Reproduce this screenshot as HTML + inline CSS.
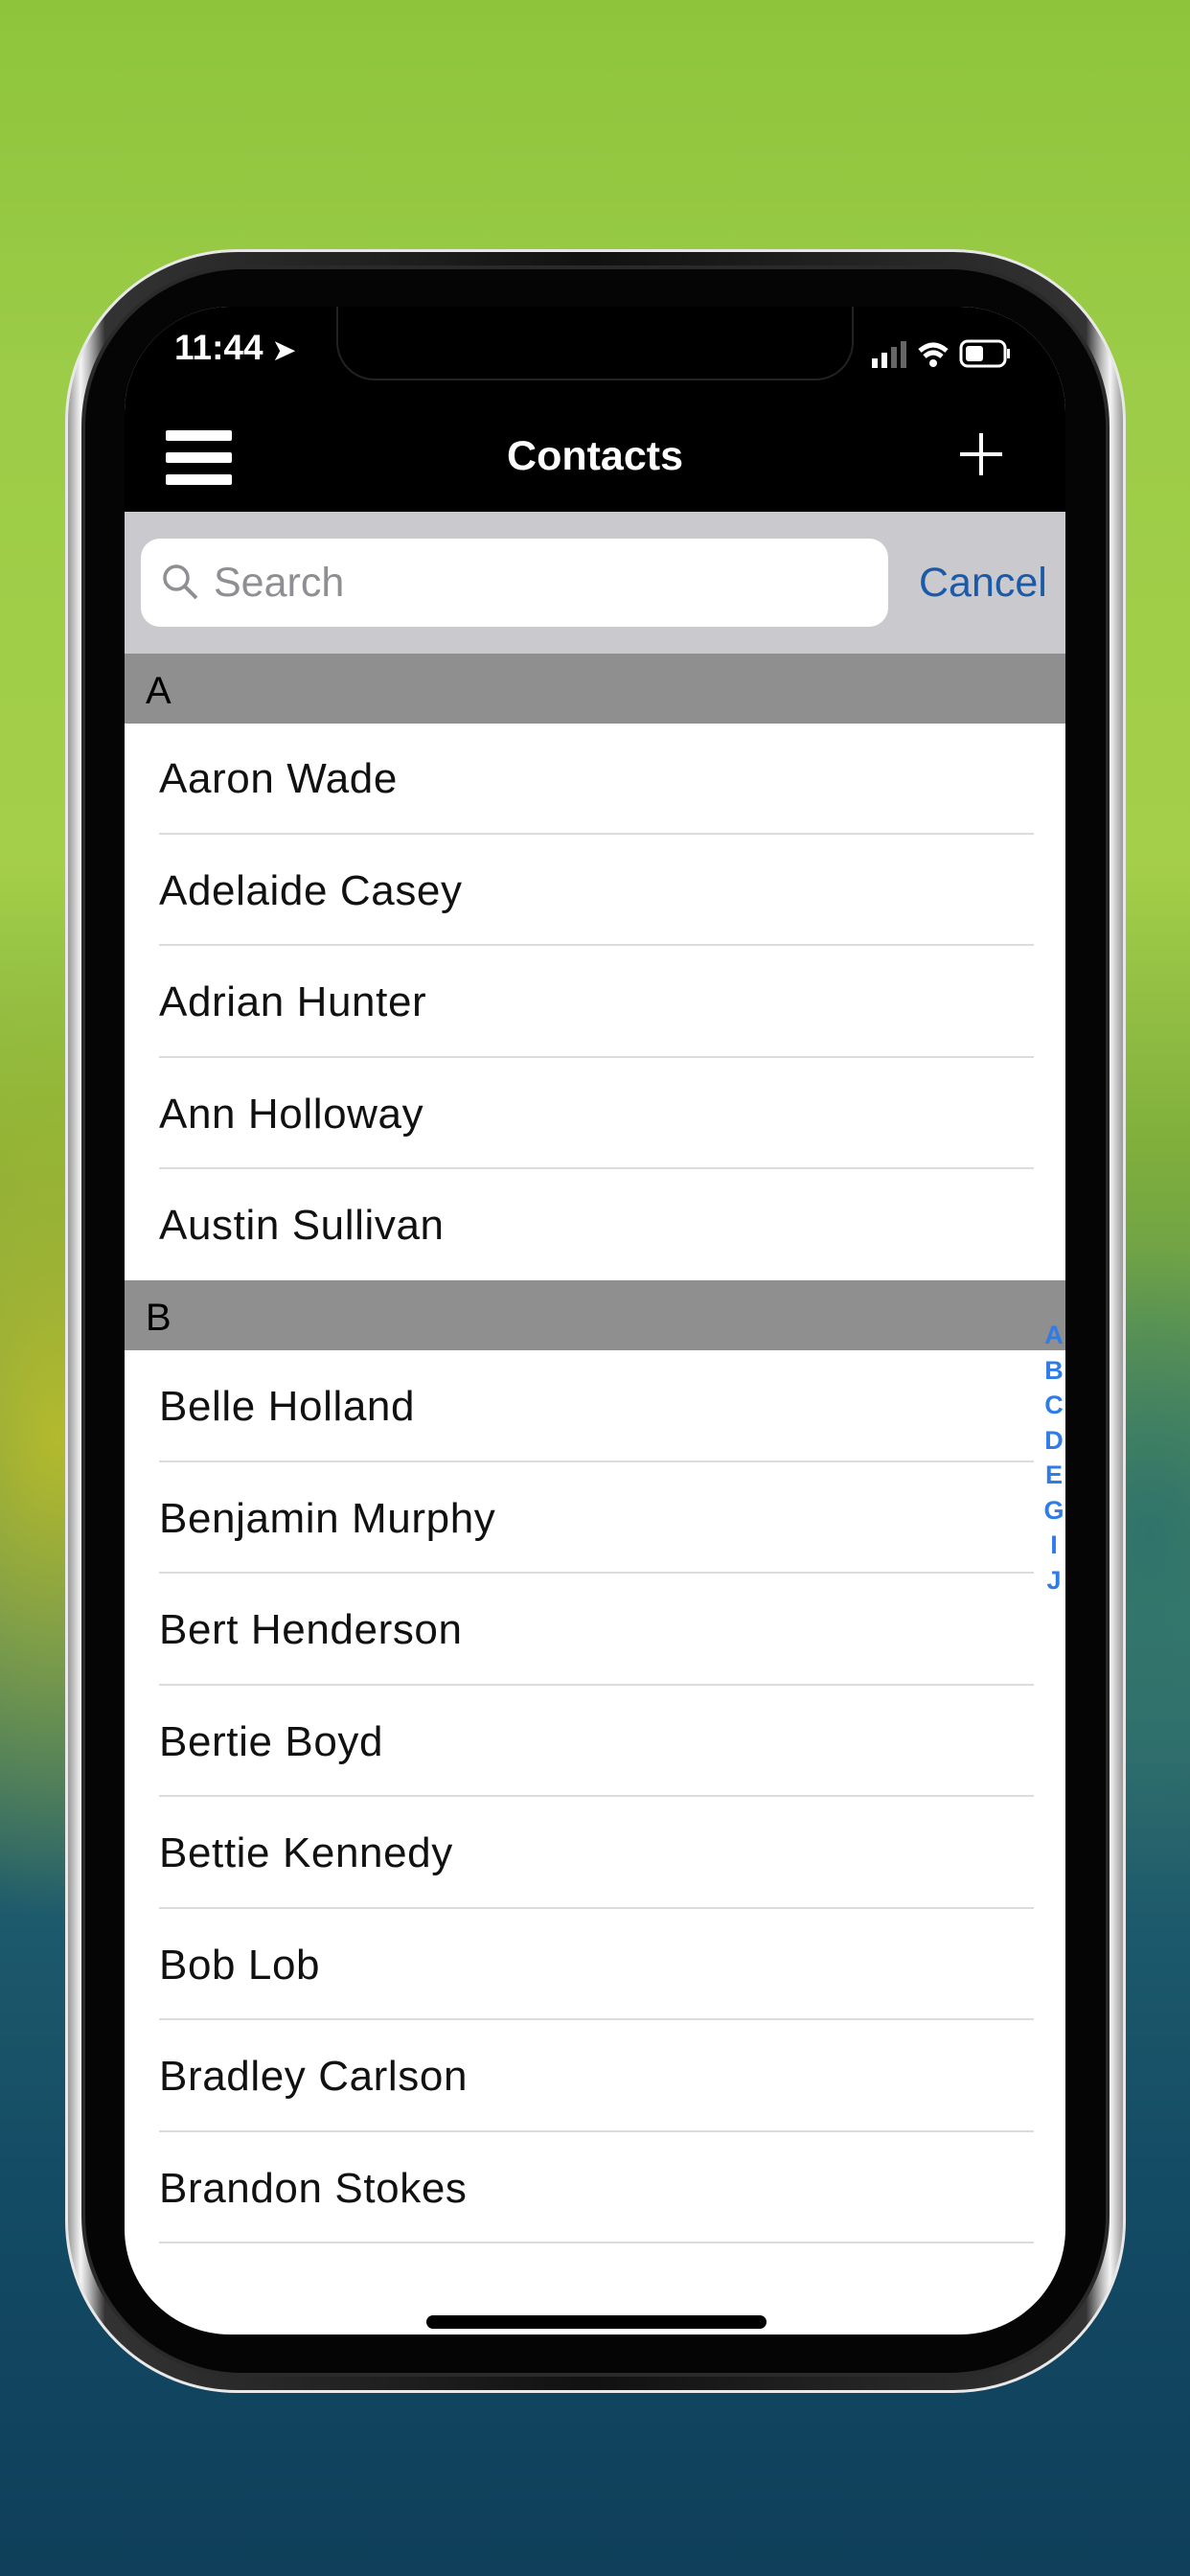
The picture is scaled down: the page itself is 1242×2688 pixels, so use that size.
<!DOCTYPE html>
<html><head><meta charset="utf-8"><style>
*{margin:0;padding:0;box-sizing:border-box}
html,body{width:1242px;height:2688px;overflow:hidden}
body{position:relative;font-family:"Liberation Sans",sans-serif;
background:
radial-gradient(ellipse 300px 500px at 60px 1500px,rgba(190,190,40,.9),rgba(190,190,40,0)),
radial-gradient(ellipse 200px 300px at 1200px 1600px,rgba(40,110,110,.8),rgba(40,110,110,0)),
linear-gradient(180deg,#8ec43c 0px,#9ccc48 400px,#a4cf4a 900px,#7fae3c 1200px,#3d7d6a 1700px,#1d5a6c 2000px,#134a64 2300px,#0f3f5a 2688px);}
.phone{position:absolute;left:68px;top:260px;width:1107px;height:2237px;border-radius:180px;
background:linear-gradient(90deg,#999 0,#f5f5f5 1.2%,#bbb 2%,#333 3.5%,#111 50%,#333 96.5%,#bbb 98%,#f5f5f5 98.8%,#999 100%);border:3px solid #e8e8e8}
.bez{position:absolute;left:14px;top:14px;right:14px;bottom:14px;border-radius:168px;background:#050505;border:4px solid #2a2a2a}
.screen{position:absolute;left:130px;top:320px;width:982px;height:2116px;border-radius:110px;background:#fff;overflow:hidden}
.nav{position:absolute;left:0;top:0;width:982px;height:214px;background:#000}
.notch{position:absolute;left:221px;top:-10px;width:540px;height:87px;background:#000;border-radius:0 0 40px 40px;border:2px solid #222;border-top:none}
.time{position:absolute;left:52px;top:22px;color:#fff;font-size:37px;font-weight:bold}
.title{position:absolute;left:0;width:982px;top:132px;text-align:center;color:#fff;font-size:43px;font-weight:bold}
.ham{position:absolute;left:43px;width:69px;height:11px;background:#fff;border-radius:2px}
.sb{position:absolute;left:0;top:214px;width:982px;height:148px;background:#c9c9ce}
.field{position:absolute;left:17px;top:28px;width:780px;height:92px;background:#fff;border-radius:20px}
.field span{position:absolute;left:76px;top:22px;font-size:43px;color:#8e8e93}
.cancel{position:absolute;left:829px;top:50px;font-size:43px;color:#1a5aa8}
.sec{position:absolute;left:0;width:982px;height:73px;background:#8f8f8f;font-size:40px;color:#000;padding-left:22px;line-height:78px}
.row{position:absolute;left:0;width:982px;height:116.5px}
.row span{position:absolute;left:36px;top:34px;font-size:44px;color:#111;letter-spacing:.6px}
.row i{position:absolute;left:36px;right:33px;bottom:0;height:2px;background:#dcdcdc}
.idx{position:absolute;left:958px;width:24px;text-align:center;font-size:27px;font-weight:bold;color:#2f7be8}
.home{position:absolute;left:315px;top:2096px;width:355px;height:14px;border-radius:7px;background:#000}
</style></head><body>
<div class="phone"><div class="bez"></div></div>
<div class="screen">
 <div class="nav">
  <div class="notch"></div>
  <div class="time">11:44 <span style="font-size:28px">➤</span></div>
  <svg style="position:absolute;left:778px;top:30px" width="150" height="40">
   <rect x="2" y="24" width="6" height="10" fill="#fff"/><rect x="12" y="18" width="6" height="16" fill="#fff"/><rect x="22" y="12" width="6" height="22" fill="#666"/><rect x="32" y="6" width="6" height="28" fill="#666"/>
   <path d="M52 16 Q66 4 80 16" stroke="#fff" stroke-width="5" fill="none"/><path d="M57 22 Q66 14 75 22" stroke="#fff" stroke-width="5" fill="none"/><circle cx="66" cy="29" r="4" fill="#fff"/>
   <rect x="95" y="6" width="46" height="26" rx="7" fill="none" stroke="#fff" stroke-width="3"/><rect x="100" y="11" width="18" height="16" rx="3" fill="#fff"/><rect x="143" y="14" width="3" height="10" fill="#fff"/>
  </svg>
  <div class="ham" style="top:129px"></div><div class="ham" style="top:152px"></div><div class="ham" style="top:175px"></div>
  <div class="title">Contacts</div>
  <svg style="position:absolute;left:870px;top:130px" width="48" height="48"><path d="M24 2V46M2 24H46" stroke="#fff" stroke-width="4"/></svg>
 </div>
 <div class="sb">
  <div class="field"><svg style="position:absolute;left:20px;top:24px" width="44" height="44"><circle cx="17" cy="17" r="12" stroke="#8e8e93" stroke-width="3.5" fill="none"/><path d="M26 26L38 38" stroke="#8e8e93" stroke-width="4"/></svg><span>Search</span></div>
  <div class="cancel">Cancel</div>
 </div>
 <div class="sec" style="top:362px">A</div>
 <div class="row" style="top:434px"><span>Aaron Wade</span><i></i></div>
 <div class="row" style="top:550.5px"><span>Adelaide Casey</span><i></i></div>
 <div class="row" style="top:667px"><span>Adrian Hunter</span><i></i></div>
 <div class="row" style="top:783.5px"><span>Ann Holloway</span><i></i></div>
 <div class="row" style="top:900px"><span>Austin Sullivan</span></div>
 <div class="sec" style="top:1016px">B</div>
 <div class="row" style="top:1089px"><span>Belle Holland</span><i></i></div>
 <div class="row" style="top:1205.5px"><span>Benjamin Murphy</span><i></i></div>
 <div class="row" style="top:1322px"><span>Bert Henderson</span><i></i></div>
 <div class="row" style="top:1438.5px"><span>Bertie Boyd</span><i></i></div>
 <div class="row" style="top:1555px"><span>Bettie Kennedy</span><i></i></div>
 <div class="row" style="top:1671.5px"><span>Bob Lob</span><i></i></div>
 <div class="row" style="top:1788px"><span>Bradley Carlson</span><i></i></div>
 <div class="row" style="top:1904.5px"><span>Brandon Stokes</span><i></i></div>
 <div class="idx" style="top:1058px">A</div>
 <div class="idx" style="top:1095px">B</div>
 <div class="idx" style="top:1131px">C</div>
 <div class="idx" style="top:1168px">D</div>
 <div class="idx" style="top:1204px">E</div>
 <div class="idx" style="top:1241px">G</div>
 <div class="idx" style="top:1277px">I</div>
 <div class="idx" style="top:1314px">J</div>
 <div class="home"></div>
</div>
</body></html>
